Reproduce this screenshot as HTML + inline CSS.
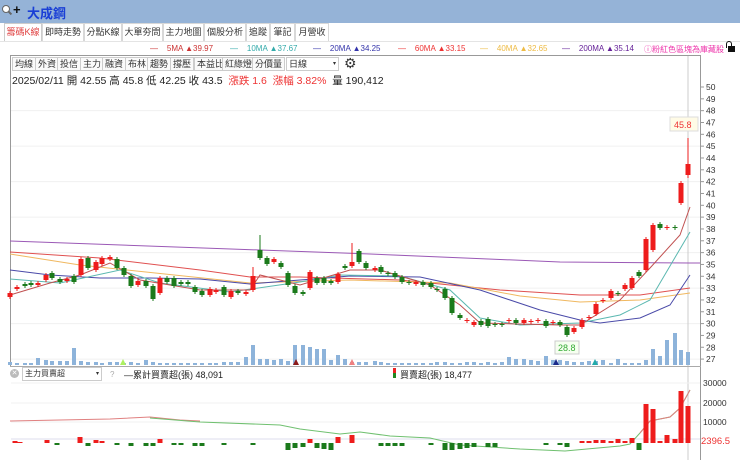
<!DOCTYPE html>
<html><head><meta charset="utf-8">
<style>
*{margin:0;padding:0;box-sizing:border-box}
body{width:740px;height:460px;overflow:hidden;background:#fff;font-family:"Liberation Sans","Noto Sans CJK TC",sans-serif;position:relative}
.abs{position:absolute}
.title{left:0;top:0;width:740px;height:23px;background:#95b3d7}
.tabs{top:23px;left:0;width:740px;height:18px;font-size:9px;color:#333}
.tab{position:absolute;top:0;height:18px;line-height:17px;border:1px solid #d8d8d8;border-bottom:none;text-align:center;background:#fff;white-space:nowrap;overflow:hidden}
.tb{position:absolute;top:57px;height:14px;line-height:13px;font-size:9px;border:1px solid #ccc;padding:0 2px;background:#fafafa;color:#333;white-space:nowrap}
</style></head><body>
<div class="abs title"></div>
<div class="abs" style="left:2px;top:5px;width:8px;height:8px;border:1.5px solid #666;border-radius:50%;background:#fff"></div>
<div class="abs" style="left:8px;top:12px;width:4px;height:2px;background:#666;transform:rotate(45deg)"></div>
<div class="abs" style="left:13px;top:2px;font-size:13px;font-weight:bold;color:#111">+</div>
<div class="abs" style="left:27px;top:3px;font-size:13px;font-weight:bold;color:#1a3fd6">大成鋼</div>
<div class="abs tabs">
<div class="tab" style="left:4px;width:38px;color:#e04040;border-color:#ccc">籌碼K線</div>
<div class="tab" style="left:42px;width:42px">即時走勢</div>
<div class="tab" style="left:84px;width:38px">分點K線</div>
<div class="tab" style="left:122px;width:41px">大單夯問</div>
<div class="tab" style="left:163px;width:41px">主力地圖</div>
<div class="tab" style="left:204px;width:42px">個股分析</div>
<div class="tab" style="left:246px;width:24px">追蹤</div>
<div class="tab" style="left:270px;width:25px">筆記</div>
<div class="tab" style="left:295px;width:34px">月營收</div>
</div>
<div class="abs" style="left:0;top:41px;width:740px;border-top:1px solid #e4e4e4"></div>
<div class="abs" style="top:44px;left:150px;font-size:8px;white-space:nowrap;width:600px">
<span style="color:#c33;position:absolute;left:0">—&nbsp;&nbsp;&nbsp;&nbsp;5MA ▲39.97</span>
<span style="color:#3aa;position:absolute;left:80px">—&nbsp;&nbsp;&nbsp;&nbsp;10MA ▲37.67</span>
<span style="color:#33a;position:absolute;left:163px">—&nbsp;&nbsp;&nbsp;&nbsp;20MA ▲34.25</span>
<span style="color:#e33;position:absolute;left:248px">—&nbsp;&nbsp;&nbsp;&nbsp;60MA ▲33.15</span>
<span style="color:#eb4;position:absolute;left:330px">—&nbsp;&nbsp;&nbsp;&nbsp;40MA ▲32.65</span>
<span style="color:#629;position:absolute;left:412px">—&nbsp;&nbsp;&nbsp;&nbsp;200MA ▲35.14</span>
<span style="color:#e3a;position:absolute;left:494px">ⓘ粉紅色區塊為庫藏股</span>
</div>
<div class="abs" style="left:728px;top:46px;width:7px;height:6px;background:#111"></div>
<div class="abs" style="left:726px;top:41px;width:6px;height:7px;border:1.5px solid #111;border-bottom:none;border-radius:3px 3px 0 0"></div>
<div class="abs" style="left:10px;top:55px;width:691px;height:1px;background:#999"></div>
<div class="abs" style="left:10px;top:55px;width:1px;height:312px;background:#999"></div>
<div class="abs" style="left:700px;top:55px;width:1px;height:405px;background:#999"></div>
<div class="tb" style="left:12px">均線</div><div class="tb" style="left:35px">外資</div><div class="tb" style="left:57px">投信</div><div class="tb" style="left:80px">主力</div><div class="tb" style="left:102px">融資</div><div class="tb" style="left:125px">布林</div><div class="tb" style="left:147px">趨勢</div><div class="tb" style="left:170px">撐壓</div><div class="tb" style="left:194px">本益比</div><div class="tb" style="left:222px">紅綠燈</div><div class="tb" style="left:252px">分價量</div>
<div class="tb" style="left:286px;width:53px;background:#fff">日線<span style="float:right;font-size:6px">▾</span></div>
<div class="abs" style="left:344px;top:55px;font-size:14px;color:#333">⚙</div>
<div class="abs" style="left:12px;top:73px;font-size:10.5px;color:#222;white-space:nowrap">2025/02/11 開 42.55 高 45.8 低 42.25 收 43.5 &nbsp;<span style="color:#e33">漲跌 1.6 &nbsp;漲幅 3.82%</span> &nbsp;量 190,412</div>
<svg class="abs" style="left:0;top:0" width="740" height="460" id="sv"></svg>
<div class="abs" style="left:10px;top:366px;width:691px;height:1px;background:#aaa"></div>
<div class="abs" style="left:10px;top:369px;width:9px;height:9px;border-radius:50%;background:#bbb;color:#fff;font-size:7px;line-height:9px;text-align:center">✕</div>
<div class="abs" style="left:22px;top:367px;width:80px;height:14px;border:1px solid #ccc;font-size:8px;line-height:12px;padding-left:2px;color:#333">主力買賣超<span style="float:right;font-size:6px;padding-right:2px">▾</span></div>
<div class="abs" style="left:110px;top:370px;font-size:8px;color:#aaa">?</div>
<div class="abs" style="left:124px;top:368px;font-size:9px;color:#222">—累計買賣超(張) 48,091</div>
<div class="abs" style="left:393px;top:368px;width:3px;height:5px;background:#e22"></div>
<div class="abs" style="left:393px;top:373px;width:3px;height:5px;background:#282"></div>
<div class="abs" style="left:400px;top:368px;font-size:9px;color:#222">買賣超(張) 18,477</div>
<script>
const s=document.getElementById('sv');let h='';
const Y=p=>87+(50-p)*11.83;
for(let p=50;p>=27;p--){let y=Y(p);h+=`<line x1="701" x2="704" y1="${y}" y2="${y}" stroke="#999"/><text x="706" y="${y+3}" font-size="8.5" fill="#333">${p}</text>`;
if(p%3==0)h+=`<line x1="11" x2="700" y1="${y}" y2="${y}" stroke="#f0f0f0"/>`;}
h+=`<line x1="688" x2="688" y1="56" y2="460" stroke="#ccc"/>`;
const pl=(pts,c)=>{h+=`<polyline fill="none" stroke="${c}" stroke-width="1" points="${pts}"/>`};
pl("10,241 260,250 370,254 560,262 690,263 700,263","#9b59b6");
pl("10,252 100,258 200,270 250,277 300,277 400,280 500,290 580,295 640,295 690,288","#e05050");
pl("10,254 80,265 250,283 350,280 450,283 520,296 580,302 640,300 690,293","#f0b860");
pl("10,270 50,275 100,278 150,278 200,279 250,284 300,280 350,276 420,277 480,290 540,310 580,320 600,323 640,318 670,305 690,275","#4a4aa8");
pl("10,279 60,283 120,270 160,283 230,292 300,282 340,275 400,276 450,290 480,318 520,325 580,323 620,315 650,300 690,232","#5bb8b0");
pl("10,295 50,283 80,275 110,263 140,280 200,290 250,290 260,275 300,285 350,270 380,270 430,285 460,305 480,323 560,325 580,325 620,300 650,268 680,235 690,207","#c05050");
const c=`10 r 293 297;17 r 287 289;25 g 284 286;31 g 283 285;38 r 283 285;46 r 275 280;52 g 273 278;60 g 279 282;67 r 279 281;74 g 276 282;81 r 259 275;88 g 258 268;96 r 262 270;102 r 258 264;110 r 257 259;117 g 259 268;124 g 268 275;131 g 276 286;138 r 281 285;146 g 281 286;153 g 286 299;160 r 278 293;167 g 278 282;174 g 278 286;181 g 282 284;188 g 282 284;195 g 287 292;202 g 291 295;210 r 289 295;216 r 290 292;224 g 287 295;231 r 291 297;238 g 291 293;246 r 292 294;253 r 276 290 267;260 g 250 258 235;267 g 258 264;274 r 259 262;281 g 263 267;288 g 273 285;295 g 286 293;303 g 292 294;310 r 272 288;317 g 278 283;324 g 278 283;331 g 281 283;338 r 274 282;345 g 266 268;352 r 262 266 243;359 g 251 262;366 g 263 268;375 r 268 270;381 g 267 272;388 g 273 274;395 g 273 277;402 g 277 282;409 g 282 283;416 r 282 284;423 g 282 285;431 g 283 287;437 g 289 290;445 g 289 298;452 g 298 313;460 g 315 318;467 r 320 321;474 r 322 325;481 g 321 325;488 g 319 326;495 g 324 325;502 g 324 325;509 r 320 321;516 g 320 323;524 r 320 323;531 r 321 322;538 r 320 321;546 g 321 326;553 r 322 323;560 g 322 325;567 g 327 335;574 r 328 332;582 r 320 327;589 r 317 318;596 r 304 314;603 r 300 301;611 r 291 298;618 g 293 294;625 r 285 289;632 r 278 288;639 g 272 276;646 r 239 270;653 r 225 250;660 g 224 228;667 r 227 228;675 g 227 228;681 r 183 203;688 r 164 175 138`.split(';');
const vols=[3,2,2,2,7,5,4,4,4,17,4,3,3,2,3,3,2,3,2,5,3,2,2,2,2,2,2,2,2,2,3,3,3,8,20,6,6,5,6,4,20,20,18,16,16,5,10,6,3,3,3,4,3,2,2,2,2,2,2,2,3,3,2,2,3,3,2,3,2,3,8,6,6,5,4,9,5,5,4,3,3,4,4,5,2,6,2,2,2,5,16,9,25,32,15,13,12,54,125];
c.forEach((t,i)=>{let [x,k,a,b,w]=t.split(' ');x=+x;a=+a;b=+b;let col=k=='r'?'#ee1c1c':'#1b7a1b';
let wt=w?+w:a-2,wb=b+2;if(x==688)wb=178;
h+=`<line x1="${x}" x2="${x}" y1="${wt}" y2="${wb}" stroke="${col}"/><rect x="${x-2.5}" y="${a}" width="5" height="${Math.max(1,b-a)}" fill="${col}"/>`;
let v=vols[i]||3;h+=`<rect x="${x-2}" y="${365-v}" width="4" height="${v}" fill="#8db3da"/>`;});
h+=`<rect x="670" y="117" width="28" height="14" fill="#fffbe6" stroke="#ddd"/><text x="674" y="128" font-size="9" fill="#e33">45.8</text>`;
h+=`<rect x="555" y="341" width="24" height="13" fill="#f6fff0" stroke="#ccc"/><text x="558" y="351" font-size="9" fill="#3a3">28.8</text>`;
[[123,'#adf060'],[296,'#8b1a1a'],[352,'#f08080'],[556,'#1a2a8a'],[595,'#2aa']].forEach(([x,cl])=>h+=`<polygon points="${x-3},365 ${x+3},365 ${x},359" fill="${cl}"/>`);
[[30000,383],[20000,403],[10000,422]].forEach(([t,y])=>{h+=`<text x="703" y="${y+3}" font-size="8.5" fill="#333">${t}</text><line x1="11" x2="700" y1="${y}" y2="${y}" stroke="#f2f2f2"/>`});
h+=`<line x1="11" x2="700" y1="439" y2="439" stroke="#dde"/><text x="701" y="444" font-size="9.5" fill="#e33">2396.5</text>`;
pl("10,421 60,420 110,419 150,417 180,420 200,421","#e08080");
pl("150,418 200,422 280,425 300,429 340,434 360,432 390,436 430,438 460,445 520,449 565,451 620,446 630,444 640,433 650,421 670,417 680,408 690,390","#70c070");
pl("640,433 650,421 670,417 680,408 690,390","#e08080");
const lb=[[15,2],[20,1],[47,3],[57,-2],[80,6],[88,-3],[96,3],[102,2],[117,-2],[131,-3],[146,-3],[153,-3],[160,4],[174,-2],[181,-2],[195,-3],[202,-3],[224,-2],[253,-2],[288,-7],[295,-5],[303,-4],[310,4],[317,-5],[324,-6],[331,-7],[338,6],[352,8],[381,-3],[388,-3],[395,-3],[402,-3],[431,-2],[445,-7],[452,-7],[460,-6],[467,-5],[474,-4],[488,-4],[495,-4],[546,-2],[560,-2],[567,-4],[582,2],[589,2],[596,3],[603,3],[611,2],[618,4],[625,2],[632,5],[639,-7],[646,39],[653,34],[660,2],[667,8],[675,4],[681,52],[688,37]];
lb.forEach(([x,v])=>{let col=v>0?'#ee1c1c':'#1b7a1b';let y=v>0?443-v:443;h+=`<rect x="${x-2.5}" y="${y}" width="5" height="${Math.abs(v)}" fill="${col}"/>`});
s.innerHTML=h;
</script>
</body></html>
